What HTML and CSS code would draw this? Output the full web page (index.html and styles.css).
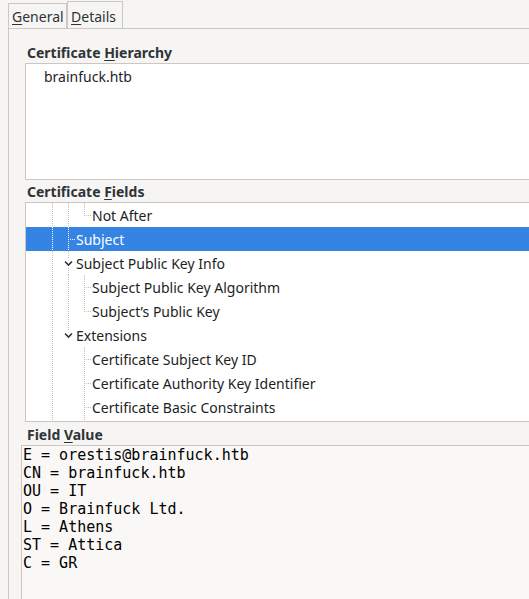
FILE: index.html
```html
<!DOCTYPE html>
<html>
<head>
<meta charset="utf-8">
<link rel="stylesheet" href="styles.css">
</head>
<body>
<div class="tabs">
  <div class="tab"><u>G</u>eneral</div>
  <div class="tab active"><u>D</u>etails</div>
</div>
<div class="panel">
  <div class="label">Certificate <u>H</u>ierarchy</div>
  <div class="box hier">
    <div class="hrow">brainfuck.htb</div>
  </div>
  <div class="label">Certificate <u>F</u>ields</div>
  <div class="box tree">
    <div class="row"><span class="sp"></span><span class="g v"></span><span class="g v"></span><span class="g l"></span><span class="txt">Not After</span></div>
    <div class="row sel"><span class="sp"></span><span class="g v"></span><span class="g t"></span><span class="txt">Subject</span></div>
    <div class="row"><span class="sp"></span><span class="g v"></span><span class="g e"><svg class="chev" width="9" height="7" viewBox="0 0 9 7"><path d="M1 1.5 L4.5 5 L8 1.5" fill="none" stroke="#2e3436" stroke-width="1.6"/></svg></span><span class="txt">Subject Public Key Info</span></div>
    <div class="row"><span class="sp"></span><span class="g v"></span><span class="g v"></span><span class="g t"></span><span class="txt">Subject Public Key Algorithm</span></div>
    <div class="row"><span class="sp"></span><span class="g v"></span><span class="g v"></span><span class="g l"></span><span class="txt">Subject’s Public Key</span></div>
    <div class="row"><span class="sp"></span><span class="g v"></span><span class="g ee"><svg class="chev" width="9" height="7" viewBox="0 0 9 7"><path d="M1 1.5 L4.5 5 L8 1.5" fill="none" stroke="#2e3436" stroke-width="1.6"/></svg></span><span class="txt">Extensions</span></div>
    <div class="row"><span class="sp"></span><span class="g v"></span><span class="g"></span><span class="g t"></span><span class="txt">Certificate Subject Key ID</span></div>
    <div class="row"><span class="sp"></span><span class="g v"></span><span class="g"></span><span class="g t"></span><span class="txt">Certificate Authority Key Identifier</span></div>
    <div class="row"><span class="sp"></span><span class="g v"></span><span class="g"></span><span class="g t"></span><span class="txt">Certificate Basic Constraints</span></div>
    <div class="row"><span class="sp"></span><span class="g v"></span><span class="g"></span><span class="g v"></span><span class="txt"></span></div>
  </div>
  <div class="label">Field <u>V</u>alue</div>
  <pre class="value">E = orestis@brainfuck.htb
CN = brainfuck.htb
OU = IT
O = Brainfuck Ltd.
L = Athens
ST = Attica
C = GR</pre>
</div>
</body>
</html>
```
FILE: styles.css
```css
html, body {
  margin: 0;
  padding: 0;
  background: #f6f5f4;
  overflow: hidden;
  width: 529px;
  height: 599px;
}
body {
  font-family: "Noto Sans", "DejaVu Sans", sans-serif;
  font-size: 14px;
  color: #2e3436;
}
u { text-decoration-thickness: 1px; text-underline-offset: 2px; }

.tabs {
  display: flex;
  align-items: flex-end;
  height: 28px;
  padding-left: 8px;
}
.tab {
  box-sizing: border-box;
  height: 25px;
  line-height: 26px;
  padding: 0 3px;
  border: 1px solid #cdc7c2;
  border-bottom: none;
  color: #2e3436;
  overflow: hidden;
}
.tab:first-child { width: 59px; }
.tab.active { height: 27px; line-height: 30px; width: 56px; }

.panel {
  box-sizing: border-box;
  margin-left: 8px;
  border-left: 1px solid #cdc7c2;
  border-top: 1px solid #cdc7c2;
  padding: 12px 0 0 16px;
  height: 571px;
  overflow: hidden;
}
.label {
  height: 22px;
  line-height: 24px;
  padding-left: 2px;
  font-weight: bold;
  color: #2e3436;
  overflow: hidden;
}
.box {
  background: #ffffff;
  border: 1px solid #cdc7c2;
  border-right: none;
  width: 520px;
}
.hier { height: 115px; }
.hrow {
  height: 24px;
  line-height: 26px;
  padding-left: 18px;
  color: #1e1e1e;
}
.tree { height: 218px; overflow: hidden; }
.tree + .label { height: 23px; line-height: 25px; }

.row {
  display: flex;
  height: 24px;
  color: #1e1e1e;
  --dot: #c4bcb4;
}
.row.sel { background: #3584e4; color: #ffffff; --dot: #ffffff; }
.sp { width: 18px; flex: none; }
.g {
  width: 16px;
  height: 24px;
  flex: none;
  display: flex;
  align-items: center;
  justify-content: center;
}
.g.v {
  background: repeating-linear-gradient(to bottom, var(--dot) 0 1px, transparent 1px 2px) 8px 0 / 1px 100% no-repeat;
}
.g.t {
  background:
    repeating-linear-gradient(to bottom, var(--dot) 0 1px, transparent 1px 2px) 8px 0 / 1px 100% no-repeat,
    repeating-linear-gradient(to right, var(--dot) 0 1px, transparent 1px 2px) 8px 12px / 7px 1px no-repeat;
}
.g.l {
  background:
    repeating-linear-gradient(to bottom, var(--dot) 0 1px, transparent 1px 2px) 8px 0 / 1px 12px no-repeat,
    repeating-linear-gradient(to right, var(--dot) 0 1px, transparent 1px 2px) 8px 12px / 7px 1px no-repeat;
}
.g.e {
  background:
    repeating-linear-gradient(to bottom, var(--dot) 0 1px, transparent 1px 2px) 8px 0 / 1px 8px no-repeat,
    repeating-linear-gradient(to bottom, var(--dot) 0 1px, transparent 1px 2px) 8px 17px / 1px 7px no-repeat;
}
.g.ee {
  background:
    repeating-linear-gradient(to bottom, var(--dot) 0 1px, transparent 1px 2px) 8px 0 / 1px 8px no-repeat;
}
.chev { display: block; margin-left: 1px; margin-top: 1px; }
.txt { white-space: nowrap; line-height: 26px; height: 24px; }

.value {
  box-sizing: border-box;
  margin: 0 0 0 -4px;
  padding: 0 0 0 1px;
  background: #f9f8f7;
  border-top: 1px solid #cdc7c2;
  border-left: 1px solid #cdc7c2;
  font-family: "DejaVu Sans Mono", monospace;
  font-size: 15px;
  line-height: 18px;
  color: #000000;
  height: 154px;
  width: 520px;
}
```
